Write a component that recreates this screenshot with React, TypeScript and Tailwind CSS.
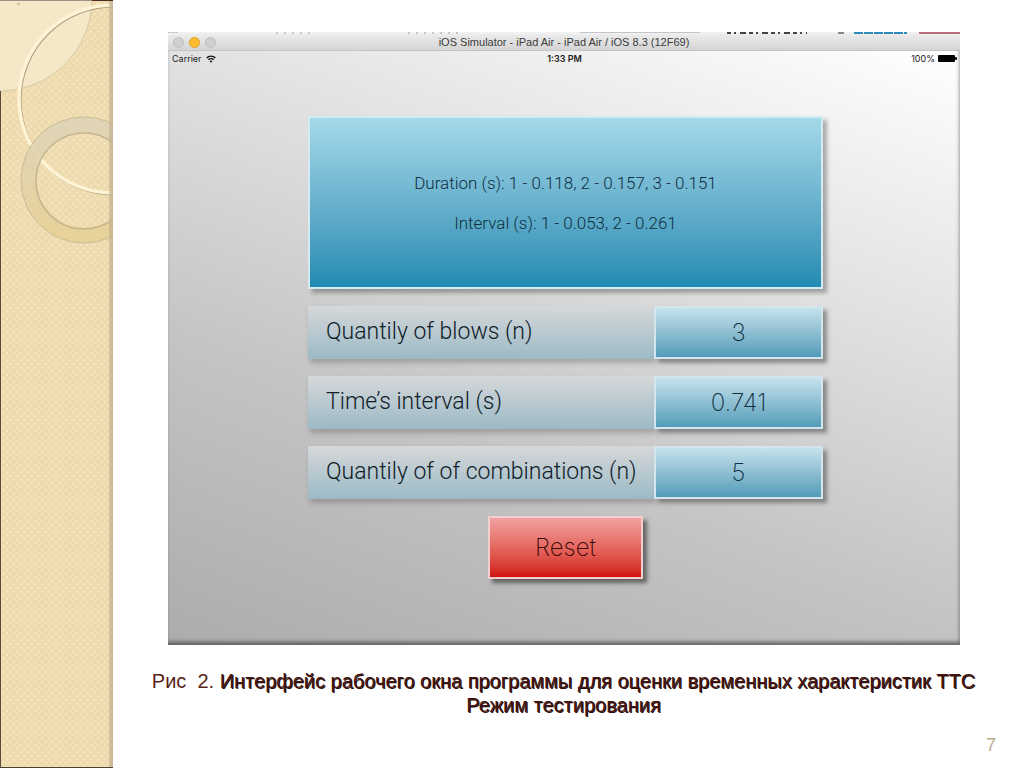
import type { ReactNode } from 'react';

const results = [
  { id: 'blows', label: 'Quantily of blows (n)', value: '3' },
  { id: 'time', label: 'Time’s interval (s)', value: '0.741' },
  { id: 'combinations', label: 'Quantily of of combinations (n)', value: '5' },
];

function Sidebar() {
  return (
    <aside className="w-[113px] shrink-0 overflow-hidden bg-[#f0deb2]">
      <svg className="h-full w-full" aria-hidden="true">
        <defs>
          <pattern id="weave" width="7" height="7" patternUnits="userSpaceOnUse">
            <rect width="7" height="7" fill="#f1dfb3" />
            <path d="M0 0l7 7M7 0l-7 7" stroke="#ecdaae" strokeWidth="1.4" />
            <circle cx="3.5" cy="0" r="1" fill="#f5e6c0" />
            <circle cx="3.5" cy="7" r="1" fill="#f5e6c0" />
            <circle cx="0" cy="3.5" r="1" fill="#f5e6c0" />
            <circle cx="7" cy="3.5" r="1" fill="#f5e6c0" />
          </pattern>
          <linearGradient id="donut" x1="0" y1="0" x2="0" y2="1">
            <stop offset="0" stopColor="#ddd3b8" />
            <stop offset="1" stopColor="#e6d095" />
          </linearGradient>
          <linearGradient id="edge" x1="0" y1="0" x2="1" y2="0">
            <stop offset="0" stopColor="#c4b08c" stopOpacity="0.6" />
            <stop offset="1" stopColor="#c4b292" stopOpacity="0.85" />
          </linearGradient>
        </defs>
        <rect width="100%" height="100%" fill="url(#weave)" />
        <circle cx="0" cy="-1" r="92" fill="#f7ecd2" fillOpacity="0.7" stroke="#d9c9a2" />
        <circle cx="114" cy="100" r="94" fill="none" stroke="#9b8c6c" strokeOpacity="0.8" strokeWidth="3" />
        <circle cx="113" cy="99" r="94" fill="none" stroke="#fdf4d6" strokeWidth="3.5" />
        <circle cx="84" cy="180" r="55" fill="none" stroke="url(#donut)" strokeOpacity="0.85" strokeWidth="15" />
        <circle cx="84" cy="180" r="63" fill="none" stroke="#c8bb97" />
        <circle cx="84" cy="181" r="48" fill="none" stroke="#bcae8a" strokeWidth="1.5" strokeOpacity="0.8" />
        <rect x="109" width="4" height="100%" fill="url(#edge)" />
        <rect width="1" height="100%" y="91" fill="#5d4a3a" />
        <rect width="92" height="1" fill="#9c9484" />
        <rect x="92" width="21" height="1" fill="#4a2c20" />
        <path d="M17 4h3" stroke="#a79978" />
        <svg y="100%" overflow="visible">
          <rect y="-1" width="113" height="1" fill="#4a4034" />
        </svg>
      </svg>
    </aside>
  );
}

function TitleBar() {
  return (
    <div className="grid h-[17px] grid-cols-[1fr_auto_1fr] items-center border-b border-[#c4c4c4] bg-linear-to-b from-[#ececec] to-[#d4d4d4] px-[5px]">
      <div className="flex gap-[5px]">
        <button aria-label="Close" className="size-[11px] rounded-full border border-[#bdbdbd] bg-[#d0d0d0]" />
        <button aria-label="Minimize" className="size-[11px] rounded-full border border-[#dfa023] bg-[#fdbc2f]" />
        <button aria-label="Zoom" className="size-[11px] rounded-full border border-[#bdbdbd] bg-[#d0d0d0]" />
      </div>
      <h1 className="text-[11px] leading-none text-[#3c3c3c]">
        iOS Simulator - iPad Air - iPad Air / iOS 8.3 (12F69)
      </h1>
    </div>
  );
}

function StatusBar() {
  return (
    <div className="grid h-[15px] grid-cols-3 items-center pr-[3px] pl-1 font-['Inter',sans-serif] text-[9px] leading-none text-[#1c1c1c]">
      <div className="flex items-center gap-1">
        <span>Carrier</span>
        <svg width="10" height="8" viewBox="0 0 10 8" fill="none" stroke="#111" strokeWidth="1.3">
          <path d="M0.6 3A6.2 6.2 0 0 1 9.4 3" />
          <path d="M2.3 4.8A3.8 3.8 0 0 1 7.7 4.8" />
          <path d="M5 7.8L3.6 6.3A2 2 0 0 1 6.4 6.3z" fill="#111" stroke="none" />
        </svg>
      </div>
      <span className="text-center font-semibold">1:33 PM</span>
      <div className="flex items-center justify-end gap-[3px]">
        <span>100%</span>
        <svg width="19" height="7" viewBox="0 0 19 7" fill="#000">
          <rect width="17" height="7" rx="1" />
          <rect x="17" y="2" width="2" height="3" rx="1" />
        </svg>
      </div>
    </div>
  );
}

// Sliver of the desktop that shows above the simulator window
function DesktopSliver() {
  return (
    <svg className="block h-[2px] w-full" viewBox="0 0 792 2" preserveAspectRatio="none" aria-hidden="true">
      <rect width="792" height="2" fill="#f1f1f1" />
      <rect width="10" height="1" fill="#c8c8c8" />
      <path d="M108 1h34M240 1h50" stroke="#999" strokeDasharray="2 6" />
      <rect x="412" width="120" height="1" fill="#c3c3c8" />
      <path d="M559 1h80" stroke="#444" strokeWidth="2" strokeDasharray="4 3 2 4 6 3" />
      <rect x="670" width="6" height="2" fill="#888" />
      <path d="M686 1h53" stroke="#2b8db8" strokeWidth="2" strokeDasharray="9 1" />
      <rect x="751" width="41" height="2" fill="#b5707c" />
    </svg>
  );
}

function Row({ id, label, children }: { id: string; label: string; children: ReactNode }) {
  return (
    <div className="flex h-[53px]">
      <label
        htmlFor={id}
        className="flex min-w-0 flex-1 items-center bg-linear-to-b from-[#d6d8d9] to-[#9bbac6] pl-[18px] font-['Roboto',sans-serif] text-[23px] font-light whitespace-nowrap text-[#10202a] shadow-[2px_4px_5px_rgba(80,60,60,0.3)]"
      >
        {label}
      </label>
      <output
        id={id}
        className="flex w-[169px] items-center justify-center border-2 border-[#d3e6ed] bg-linear-to-b from-[#c6e2ec] to-[#529cb9] text-[24px] text-[#10303f] shadow-[4px_4px_4px_rgba(60,60,60,0.5)]"
      >
        {children}
      </output>
    </div>
  );
}

export default function App() {
  return (
    <div className="flex min-h-screen bg-white font-['Liberation_Sans',Arial,sans-serif]">
      <Sidebar />
      <main className="flex min-w-0 flex-1 flex-col pt-8">
        <section className="mr-16 ml-[55px]">
          <DesktopSliver />
          <TitleBar />
          <div className="bg-[linear-gradient(200deg,#ffffff_0%,#e4e4e4_30%,#c4c4c4_65%,#acacac_100%)] pb-[66px] shadow-[inset_-1px_-4px_4px_-1px_rgba(60,60,60,0.7)]">
            <StatusBar />
            <div className="mt-[50px] mr-[137px] ml-[140px] flex flex-col gap-[17px] font-['Inter',sans-serif] font-extralight">
              <div className="flex h-[173px] flex-col items-center justify-center gap-4 border-2 border-[#d5ebf3] bg-linear-to-b from-[#a4d9e9] to-[#1e8bb2] font-['Roboto',sans-serif] text-[17px] leading-6 font-light text-[#10303f] shadow-[4px_4px_4px_rgba(60,60,60,0.4)]">
                <p>Duration (s): 1 - 0.118, 2 - 0.157, 3 - 0.151</p>
                <p>Interval (s): 1 - 0.053, 2 - 0.261</p>
              </div>
              {results.map((r) => (
                <Row key={r.id} id={r.id} label={r.label}>
                  {r.value}
                </Row>
              ))}
              <button className="h-[63px] w-[155px] self-center border-2 border-[#f5cfcf] bg-linear-to-b from-[#f0a0a0] to-[#d20c0c] text-[24px] text-[#3a0808] shadow-[4px_4px_4px_rgba(50,50,50,0.65)]">
                Reset
              </button>
            </div>
          </div>
        </section>
        <p className="mt-6 mr-10 ml-[30px] text-center text-[20px] leading-6 text-[#5a1f1a]">
          <span className="whitespace-pre">Рис  2. </span>
          <span className="text-[#451510] [text-shadow:1px_1px_0_#2a0f0b]">
            Интерфейс рабочего окна программы для оценки временных характеристик ТТС
            <br />
            Режим тестирования
          </span>
        </p>
        <footer className="mt-auto mb-[11px] pr-7 text-right text-[18px] leading-6 text-[#b9ab92]">7</footer>
      </main>
    </div>
  );
}
